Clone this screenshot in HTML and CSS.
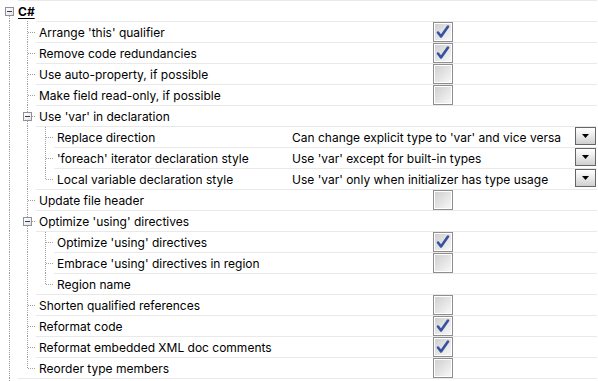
FILE: index.html
```html
<!DOCTYPE html>
<html lang="en">
<head>
  <meta charset="UTF-8">
  <title>Code Cleanup - C#</title>
  <link rel="stylesheet" href="styles.css">
</head>
<body>
  <div class="tree-view">
    <!-- root -->
    <div class="row">
      <div class="guides"><span class="g root-g"><span class="expander"></span></span></div>
      <div class="cell root-cell"><span class="label title">C#</span></div>
    </div>

    <div class="row lvl1">
      <div class="guides"><span class="g pipe"></span><span class="g tee"></span></div>
      <div class="cell"><span class="label">Arrange 'this' qualifier</span><span class="value"><span class="check on"><svg viewBox="0 0 16 16"><path d="M3 8.5 L6 12.5 L13 2.5"/></svg></span></span></div>
    </div>
    <div class="row lvl1">
      <div class="guides"><span class="g pipe"></span><span class="g tee"></span></div>
      <div class="cell"><span class="label">Remove code redundancies</span><span class="value"><span class="check on"><svg viewBox="0 0 16 16"><path d="M3 8.5 L6 12.5 L13 2.5"/></svg></span></span></div>
    </div>
    <div class="row lvl1">
      <div class="guides"><span class="g pipe"></span><span class="g tee"></span></div>
      <div class="cell"><span class="label">Use auto-property, if possible</span><span class="value"><span class="check"></span></span></div>
    </div>
    <div class="row lvl1">
      <div class="guides"><span class="g pipe"></span><span class="g tee"></span></div>
      <div class="cell"><span class="label">Make field read-only, if possible</span><span class="value"><span class="check"></span></span></div>
    </div>

    <div class="row lvl1">
      <div class="guides"><span class="g pipe"></span><span class="g tee"><span class="expander"></span></span></div>
      <div class="cell"><span class="label">Use 'var' in declaration</span><span class="value"></span></div>
    </div>
    <div class="row lvl2 after-parent">
      <div class="guides"><span class="g pipe"></span><span class="g pipe"></span><span class="g tee"></span></div>
      <div class="cell"><span class="label">Replace direction</span><span class="value"><span class="combo"><span class="combo-text">Can change explicit type to 'var' and vice versa</span><span class="combo-btn"><svg viewBox="0 0 7 4"><polygon points="0,0 7,0 3.5,4"/></svg></span></span></span></div>
    </div>
    <div class="row lvl2">
      <div class="guides"><span class="g pipe"></span><span class="g pipe"></span><span class="g tee"></span></div>
      <div class="cell"><span class="label">'foreach' iterator declaration style</span><span class="value"><span class="combo"><span class="combo-text">Use 'var' except for built-in types</span><span class="combo-btn"><svg viewBox="0 0 7 4"><polygon points="0,0 7,0 3.5,4"/></svg></span></span></span></div>
    </div>
    <div class="row lvl2">
      <div class="guides"><span class="g pipe"></span><span class="g pipe"></span><span class="g elbow"></span></div>
      <div class="cell"><span class="label">Local variable declaration style</span><span class="value"><span class="combo"><span class="combo-text">Use 'var' only when initializer has type usage</span><span class="combo-btn"><svg viewBox="0 0 7 4"><polygon points="0,0 7,0 3.5,4"/></svg></span></span></span></div>
    </div>

    <div class="row lvl1">
      <div class="guides"><span class="g pipe"></span><span class="g tee"></span></div>
      <div class="cell"><span class="label">Update file header</span><span class="value"><span class="check"></span></span></div>
    </div>

    <div class="row lvl1">
      <div class="guides"><span class="g pipe"></span><span class="g tee"><span class="expander"></span></span></div>
      <div class="cell"><span class="label">Optimize 'using' directives</span><span class="value"></span></div>
    </div>
    <div class="row lvl2 after-parent">
      <div class="guides"><span class="g pipe"></span><span class="g pipe"></span><span class="g tee"></span></div>
      <div class="cell"><span class="label">Optimize 'using' directives</span><span class="value"><span class="check on"><svg viewBox="0 0 16 16"><path d="M3 8.5 L6 12.5 L13 2.5"/></svg></span></span></div>
    </div>
    <div class="row lvl2">
      <div class="guides"><span class="g pipe"></span><span class="g pipe"></span><span class="g tee"></span></div>
      <div class="cell"><span class="label">Embrace 'using' directives in region</span><span class="value"><span class="check"></span></span></div>
    </div>
    <div class="row lvl2">
      <div class="guides"><span class="g pipe"></span><span class="g pipe"></span><span class="g elbow"></span></div>
      <div class="cell"><span class="label">Region name</span><span class="value"></span></div>
    </div>

    <div class="row lvl1">
      <div class="guides"><span class="g pipe"></span><span class="g tee"></span></div>
      <div class="cell"><span class="label">Shorten qualified references</span><span class="value"><span class="check"></span></span></div>
    </div>
    <div class="row lvl1">
      <div class="guides"><span class="g pipe"></span><span class="g tee"></span></div>
      <div class="cell"><span class="label">Reformat code</span><span class="value"><span class="check on"><svg viewBox="0 0 16 16"><path d="M3 8.5 L6 12.5 L13 2.5"/></svg></span></span></div>
    </div>
    <div class="row lvl1">
      <div class="guides"><span class="g pipe"></span><span class="g tee"></span></div>
      <div class="cell"><span class="label">Reformat embedded XML doc comments</span><span class="value"><span class="check on"><svg viewBox="0 0 16 16"><path d="M3 8.5 L6 12.5 L13 2.5"/></svg></span></span></div>
    </div>
    <div class="row lvl1">
      <div class="guides"><span class="g pipe"></span><span class="g elbow"></span></div>
      <div class="cell"><span class="label">Reorder type members</span><span class="value"><span class="check"></span></span></div>
    </div>

    <div class="row tree-end">
      <div class="guides"><span class="g pipe"></span></div>
      <div class="cell"></div>
    </div>
  </div>
</body>
</html>
```

FILE: styles.css
```css
body {
  margin: 0;
  background: #fff;
  font-family: Inter, 'DejaVu Sans', sans-serif;
  font-size: 12px;
  color: #000;
}
.tree-view {
  width: 597px;
}
.row {
  display: flex;
  height: 21px;
}
.guides {
  display: flex;
  flex: none;
}
.g {
  width: 18px;
  height: 21px;
  flex: none;
  display: flex;
  justify-content: center;
  align-items: flex-start;
}
/* dotted tree lines */
.pipe {
  background: repeating-linear-gradient(to bottom, #a0a0a0 0 1px, transparent 1px 2px) 9px 0 / 1px 100% no-repeat;
}
.tee {
  background:
    repeating-linear-gradient(to bottom, #a0a0a0 0 1px, transparent 1px 2px) 9px 0 / 1px 100% no-repeat,
    repeating-linear-gradient(to right, #a0a0a0 0 1px, transparent 1px 2px) 10px 11px / 8px 1px no-repeat;
}
.elbow {
  background:
    repeating-linear-gradient(to bottom, #a0a0a0 0 1px, transparent 1px 2px) 9px 0 / 1px 11px no-repeat,
    repeating-linear-gradient(to right, #a0a0a0 0 1px, transparent 1px 2px) 10px 11px / 8px 1px no-repeat;
}
/* first child row: separator starts under the parent's label */
.after-parent .tee {
  background:
    linear-gradient(#e9e9e9, #e9e9e9) 0 0 / 100% 1px no-repeat,
    repeating-linear-gradient(to bottom, #a0a0a0 0 1px, transparent 1px 2px) 9px 1px / 1px 100% no-repeat,
    repeating-linear-gradient(to right, #a0a0a0 0 1px, transparent 1px 2px) 10px 11px / 8px 1px no-repeat;
}
.root-g {
  background: repeating-linear-gradient(to bottom, #a0a0a0 0 1px, transparent 1px 2px) 9px 16px / 1px 5px no-repeat;
}
.expander {
  width: 9px;
  height: 9px;
  box-sizing: border-box;
  margin-top: 7px;
  border: 1px solid #919191;
  background:
    linear-gradient(#27407a, #27407a) center / 5px 1px no-repeat,
    linear-gradient(135deg, #ffffff 0%, #e4e4e4 100%);
}

.cell {
  flex: 1;
  display: flex;
  height: 20px;
  border-top: 1px solid #e9e9e9;
}
.label {
  flex: 1;
  padding-left: 3px;
  line-height: 21px;
  white-space: nowrap;
  overflow: hidden;
}
.root-cell .label {
  padding-left: 0;
}
.title {
  font-weight: bold;
  text-decoration: underline;
  text-underline-offset: 2px;
}
.value {
  width: 308px;
  flex: none;
  display: flex;
  justify-content: center;
  align-items: flex-start;
}

/* check boxes */
.check {
  width: 20px;
  height: 20px;
  box-sizing: border-box;
  border: 1px solid #8e8e8e;
  padding: 1px;
  background: #fff;
  display: flex;
}
.check::before {
  content: "";
  flex: 1;
  background: linear-gradient(135deg, #d0d0d0 0%, #f7f7f7 100%);
}
.check.on::before {
  display: none;
}
.check.on {
  background: linear-gradient(135deg, #d0d0d0 0%, #f7f7f7 100%) content-box, #fff;
}
.check svg {
  width: 16px;
  height: 16px;
  fill: none;
  stroke: #37529f;
  stroke-width: 2.6;
  stroke-linecap: round;
  stroke-linejoin: round;
}

/* combo boxes */
.combo {
  flex: 1;
  display: flex;
  padding-left: 3px;
}
.combo-text {
  flex: 1;
  line-height: 21px;
  white-space: nowrap;
}
.combo-btn {
  width: 21px;
  height: 18px;
  box-sizing: border-box;
  margin-right: 1px;
  border: 1px solid #666;
  background: linear-gradient(to bottom, #ffffff 0%, #ececec 45%, #cfcfcf 100%);
  display: flex;
  justify-content: center;
  padding-top: 6px;
}
.combo-btn svg {
  width: 7px;
  height: 4px;
  fill: #000;
}

.tree-end {
  height: 3px;
}
.tree-end .g {
  height: 3px;
}
.tree-end .cell {
  height: 2px;
}
```
